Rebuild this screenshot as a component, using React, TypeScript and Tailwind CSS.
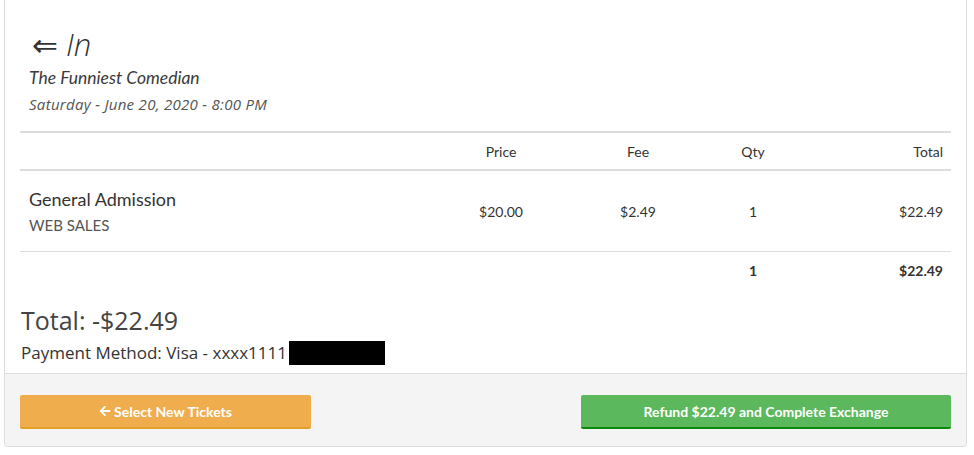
import React from 'react';
import { FaArrowLeft } from 'react-icons/fa';

const heading = "font-['Open_Sans','DejaVu_Sans',sans-serif]";
const body = "font-['Lato','Liberation_Sans',sans-serif]";

const cols = 'grid grid-cols-[420px_122px_152px_78px_1fr]';

export default function App() {
  return (
    <div className={`min-h-screen bg-white ${body} text-[#333]`}>
      <div className="ml-[4px] w-[963px] border-x border-b border-[#ddd] rounded-b-[4px] overflow-hidden">
        <div className="px-[15px] pt-[26px]">
          <div className="pl-[12px]">
            <h1 className={`${heading} italic font-light text-[31px] leading-[36px] text-[#333]`}>⇐ In</h1>
            <div className="-ml-[3px] mt-[6px] italic font-normal text-[17.5px] leading-[20px] text-[#3a3a3a]">The Funniest Comedian</div>
            <div className={`${heading} -ml-[3px] italic font-normal text-[15px] tracking-[0.3px] leading-[20px] mt-[6px] text-[#555]`}>
              Saturday - June 20, 2020 - 8:00 PM
            </div>
          </div>

          <div className="mt-[17px] border-t-2 border-[#ddd] text-[14px]">
            <div className={`${cols} h-[38px] items-center border-b-2 border-[#ddd]`}>
              <div />
              <div className="text-center">Price</div>
              <div className="text-center">Fee</div>
              <div className="text-center">Qty</div>
              <div className="text-right pr-[8px]">Total</div>
            </div>
            <div className={`${cols} h-[81px] items-center border-b border-[#ddd]`}>
              <div className="pl-[9px]">
                <div className="text-[18px] leading-[22px]">General Admission</div>
                <div className="text-[15px] leading-[20px] mt-[5px] text-[#555]">WEB SALES</div>
              </div>
              <div className="text-center">$20.00</div>
              <div className="text-center">$2.49</div>
              <div className="text-center">1</div>
              <div className="text-right pr-[8px]">$22.49</div>
            </div>
            <div className={`${cols} h-[37px] items-center font-bold`}>
              <div />
              <div />
              <div />
              <div className="text-center">1</div>
              <div className="text-right pr-[8px]">$22.49</div>
            </div>
          </div>

          <div className={`${heading} mt-[16px] pl-[1px]`}>
            <div className="text-[25px] leading-[30px] text-[#444]">Total: -$22.49</div>
            <div className="mt-[6px] pb-[8px] flex items-center text-[17px] leading-[24px] text-[#333]">
              Payment Method: Visa - xxxx1111
              <span className="ml-[2px] inline-block w-[96px] h-[24px] bg-black" />
            </div>
          </div>
        </div>

        <div className="bg-[#f4f4f4] border-t border-[#ddd] px-[15px] pt-[21px] pb-[17px] flex justify-between">
          <button className="w-[291px] h-[34px] bg-[#f0ad4e] border-b-2 border-[#e0a125] rounded-[2px] text-white font-bold text-[14px] flex items-center justify-center gap-[3px]">
            <FaArrowLeft className="w-[12px] h-[12px]" />
            Select New Tickets
          </button>
          <button className="w-[370px] h-[34px] bg-[#5cb85c] border-b-2 border-[#0a8a0a] rounded-[2px] text-white font-bold text-[14px]">
            Refund $22.49 and Complete Exchange
          </button>
        </div>
      </div>
    </div>
  );
}
